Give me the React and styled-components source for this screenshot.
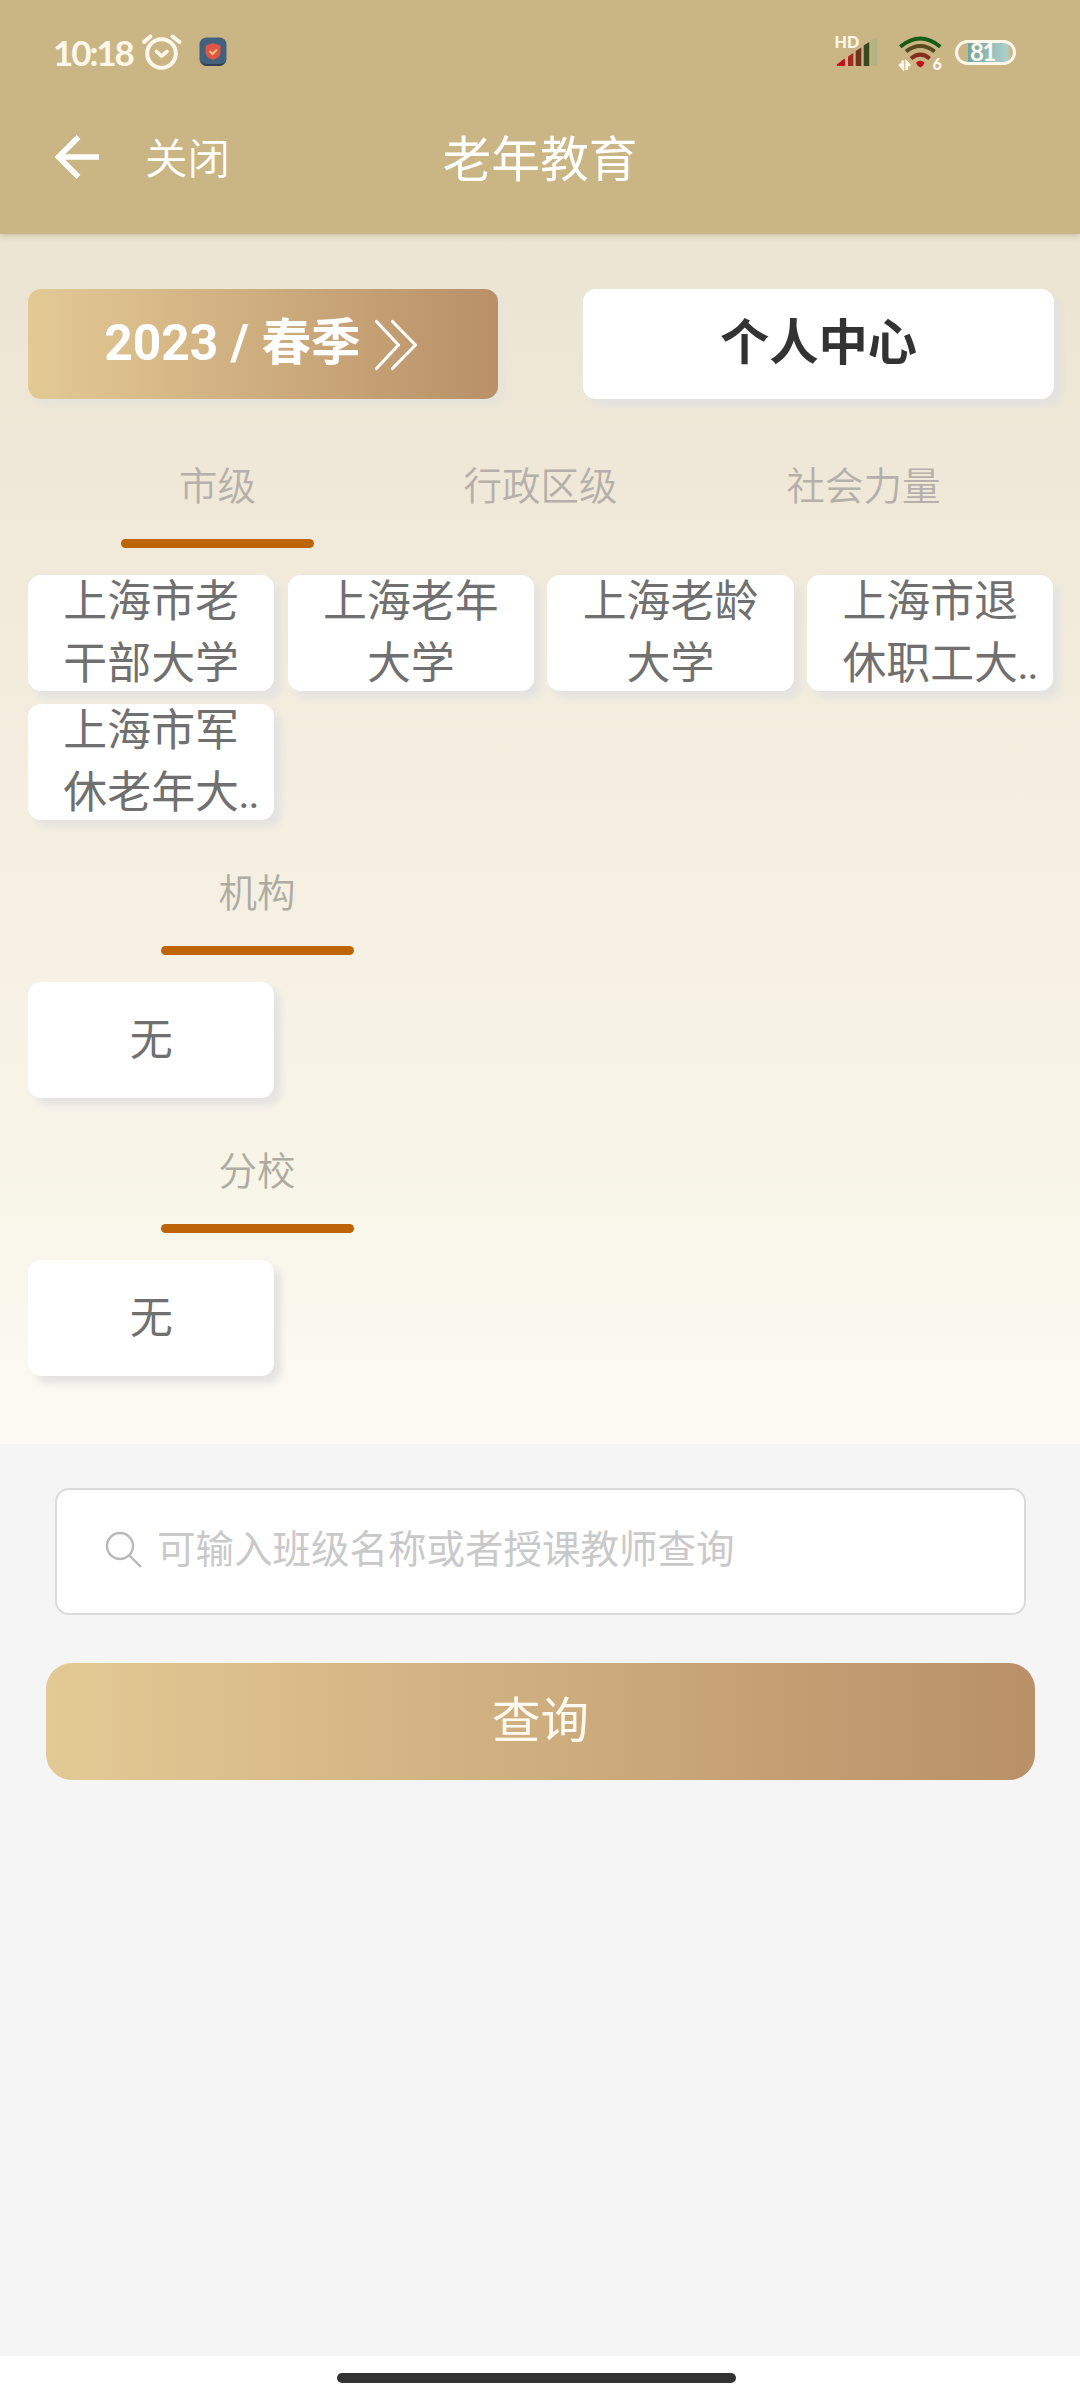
import React, { useState } from "react";
import styled, { createGlobalStyle } from "styled-components";

const GlobalStyle = createGlobalStyle`
  * {
    box-sizing: border-box;
  }

  body {
    margin: 0;
    background: #f5f5f5;
    font-family: Roboto, "Noto Sans CJK SC", sans-serif;
  }

  button {
    padding: 0;
    border: none;
    background: none;
    font-family: inherit;
  }
`;

const Page = styled.div`
  width: 1080px;
  height: 2400px;
  display: flex;
  flex-direction: column;
  background: #f5f5f5;
`;

const Header = styled.header`
  height: 234px;
  flex: none;
  background: #cab585;
  color: #fff;
  box-shadow: 0 1px 6px rgba(120, 100, 60, 0.35);
  z-index: 1;
`;

const StatusBar = styled.div`
  height: 104px;
  padding: 0 64px 0 53px;
  display: flex;
  align-items: center;
  color: #fff8ea;
`;

const Time = styled.span`
  width: 88px;
  font-family: Lato, sans-serif;
  font-size: 35px;
  font-weight: 700;
  letter-spacing: -2.1px;
  line-height: 50px;
`;

const StatusIcons = styled.div`
  margin-left: auto;
  display: flex;
  align-items: center;
`;

const Battery = styled.div`
  width: 61px;
  height: 25px;
  margin-left: 12px;
  padding-right: 6px;
  border: 3px solid #fff8ea;
  border-radius: 13px;
  background: linear-gradient(90deg, transparent 10px, #70a5a3 10px, #add0cc 49px, transparent 53px);
  font-family: Lato, sans-serif;
  font-size: 24px;
  font-weight: 700;
  line-height: 18px;
  letter-spacing: -1.5px;
  text-align: center;
`;

const NavBar = styled.div`
  height: 106px;
  display: grid;
  grid-template-columns: 1fr auto 1fr;
  align-items: center;
`;

const NavLeft = styled.div`
  display: flex;
  align-items: center;
  gap: 45px;
  padding-left: 54px;
`;

const CloseText = styled.span`
  margin-top: -4px;
  font-size: 42.5px;
  font-weight: 350;
`;

const Title = styled.h1`
  margin: -3px 0 0;
  font-size: 48.8px;
  font-weight: 400;
`;

const Content = styled.main`
  height: 1210px;
  flex: none;
  padding: 55px 26px 0 28px;
  background: linear-gradient(180deg, #ece4d2 0%, #f4eee0 45%, #f8f5e9 80%, #fcfaf3 100%);
`;

const TopActions = styled.div`
  display: flex;
  justify-content: space-between;
`;

const TopButton = styled.button`
  width: ${(props) => (props.$primary ? "470px" : "471px")};
  height: 110px;
  display: flex;
  align-items: center;
  justify-content: center;
  gap: 13px;
  padding-bottom: 12px;
  padding-right: ${(props) => (props.$primary ? "4px" : "0")};
  border-radius: 13px;
  font-size: ${(props) => (props.$primary ? "49.7px" : "49.3px")};
  font-weight: 700;
  color: ${(props) => (props.$primary ? "#fff" : "#333")};
  background: ${(props) =>
    props.$primary ? "linear-gradient(90deg, #e3ca95, #b99068)" : "#fff"};
  box-shadow: 7px 7px 7px ${(props) => (props.$primary ? "#e7e4db" : "#e3e2e0")};
`;

const Tabs = styled.div`
  display: flex;
  margin: 55px 26px 27px 28px;
`;

const Tab = styled.button`
  width: ${(props) => (props.$single ? "404px" : "323px")};
  height: 94px;
  display: flex;
  flex-direction: column;
  align-items: center;
  justify-content: space-between;
  color: ${(props) => (props.$single ? "#aeaba2" : "#b6b0ab")};
  font-size: 38.5px;
  font-weight: 350;
  line-height: 66px;

  &::after {
    content: "";
    width: 193px;
    height: 9px;
    border-radius: 5px;
    background: ${(props) => (props.$active ? "#be6306" : "transparent")};
  }
`;

const SchoolGrid = styled.div`
  display: grid;
  grid-template-columns: repeat(4, 246.3px);
  column-gap: 13.4px;
  row-gap: 13px;
`;

const School = styled.button`
  height: 116px;
  display: flex;
  align-items: center;
  justify-content: center;
  border-radius: 13px;
  background: #fff;
  box-shadow: 7px 7px 7px #e4e3e1;
  color: #707070;
  font-size: ${(props) => (props.$empty ? "43px" : "43.9px")};
  line-height: 62px;
`;

const SchoolName = styled.span`
  position: relative;
  width: 176px;
  white-space: pre-line;
`;

const Dots = styled.span`
  position: absolute;
  left: 175px;
  bottom: 0;
  letter-spacing: -1.5px;
`;

const Section = styled.section`
  padding-top: 41px;
`;

const SectionTab = styled.div`
  display: flex;
  margin: 0 27px 27px;
`;

const SearchArea = styled.section`
  flex: 1;
  padding: 44px 45px 0 46px;
`;

const SearchBox = styled.div`
  height: 127px;
  margin: 0 9px;
  padding-left: 48px;
  padding-bottom: 4px;
  display: flex;
  align-items: center;
  gap: 14px;
  border: 2px solid #dbdbdb;
  border-radius: 14px;
  background: #fff;
`;

const SearchInput = styled.input`
  flex: 1;
  padding: 0;
  border: none;
  outline: none;
  background: none;
  font-family: inherit;
  font-size: 38.5px;
  height: 60px;

  &::placeholder {
    color: #c9c9c9;
    opacity: 1;
  }
`;

const SearchButton = styled.button`
  width: 100%;
  height: 117px;
  margin-top: 48px;
  padding-bottom: 10px;
  border-radius: 26px;
  background: linear-gradient(90deg, #e3ca95, #b99068);
  color: #fffaf0;
  font-size: 48.5px;
`;

const HomeArea = styled.footer`
  height: 44px;
  flex: none;
  display: flex;
  justify-content: center;
  padding-top: 17px;
  padding-right: 7px;
  background: #fff;
`;

const HomeBar = styled.div`
  width: 399px;
  height: 10px;
  border-radius: 5px;
  background: #333;
`;

const AlarmIcon = () => (
  <svg width="42" height="38" viewBox="0 0 42 38" fill="none" stroke="#fff8ea" strokeLinecap="round">
    <circle cx="20.5" cy="20.5" r="14.3" strokeWidth="4" />
    <path d="M15.5 18.5l5 4.5 5.5-4.5" strokeWidth="3.6" strokeLinejoin="round" />
    <path d="M3 9l6.5-5.5M38.5 9l-7-5.5" strokeWidth="4" />
  </svg>
);

const Shield = styled.svg`
  margin-left: 16px;
`;

const ShieldIcon = () => (
  <Shield width="28" height="30" viewBox="0 0 28 30">
    <rect x="0.5" y="0.5" width="27" height="28.5" rx="7" fill="#42617d" />
    <path d="M1.5 24q2 5 7 5h11q5 0 7-5q-2 3-7 3h-11q-5 0-7-3z" fill="#33404f" />
    <path d="M14 6l7.5 2.5v7q0 5-7.5 7.5q-7.5-2.5-7.5-7.5v-7z" fill="#dd5546" />
    <path d="M10.5 14l3 3 4.5-4.5" fill="none" stroke="#f8c477" strokeWidth="2" />
  </Shield>
);

const SignalIcon = () => (
  <svg width="46" height="42" viewBox="0 -4 46 42">
    <path d="M4.5 30.2l6.7-5.5v5.5z" fill="#c1131d" stroke="#c1131d" strokeWidth="1.6" strokeLinejoin="round" />
    <path d="M15 21.5l5.3-3.5v13h-5.3z" fill="#a32a20" />
    <path d="M22.7 16l5.6-3.5v18.5h-5.6z" fill="#6d3420" />
    <path d="M30.7 10.5l5.6-3.5v24h-5.6z" fill="#364a1d" />
    <path d="M38.5 5.500l5.6-3.500v29h-5.6z" fill="#b3b284" />
    <text x="1.5" y="13.3" fill="#fff8ea" fontFamily="Lato, sans-serif" fontSize="16" fontWeight="900">
      HD
    </text>
  </svg>
);

const Wifi = styled.svg`
  margin-left: 18px;
`;

const WifiIcon = () => (
  <Wifi width="46" height="48" viewBox="0 -6 46 48" fill="none" strokeWidth="4">
    <path d="M3.3 12.8q20-16.5 40 0" stroke="#175b16" />
    <path d="M9 17.5q14.3-11 28.6 0" stroke="#574b1d" />
    <path d="M14 24.5q9.3-7.8 18.6 0" stroke="#862d1c" />
    <path d="M19 28.5q4.3-3.6 8.6 0l-1.5 3-2.8 2-2.8-2z" fill="#c1131d" />
    <path d="M5.8 26.5v7.5l-3.5-4M9.700 36v-7.5l3.500 3.500" stroke="#fff8ea" strokeWidth="2.8" />
    <text x="35.5" y="36" fill="#fff8ea" fontFamily="Lato, sans-serif" fontSize="16" fontWeight="900">
      6
    </text>
  </Wifi>
);

const BackIcon = () => (
  <svg width="46" height="44" viewBox="0 0 46 44" fill="none" stroke="#fff" strokeWidth="5.5">
    <path d="M24.5 2L4.5 22l20 20M4.5 22H45" />
  </svg>
);

const Chevrons = styled.svg`
  margin-top: 13px;
`;

const DoubleArrow = () => (
  <Chevrons
    width="44"
    height="52"
    viewBox="0 0 44 52"
    fill="none"
    stroke="#fff"
    strokeWidth="3.2"
    strokeLinecap="round"
    strokeLinejoin="round"
  >
    <path d="M2.5 2.5l22 23.5-22 23.5M18.5 2.5l23 23.5-23 23.5" />
  </Chevrons>
);

const MagnifierIcon = () => (
  <svg width="38" height="38" viewBox="0 0 38 38" fill="none" stroke="#b9b9b9" strokeWidth="2.4">
    <circle cx="15" cy="15" r="13" />
    <path d="M24.5 24.5L36 36" />
  </svg>
);

const levels = ["市级", "行政区级", "社会力量"];

const schools = [
  { name: "上海市老\n干部大学" },
  { name: "上海老年\n大学" },
  { name: "上海老龄\n大学" },
  { name: "上海市退\n休职工大", cut: true },
  { name: "上海市军\n休老年大", cut: true },
];

const EmptySection = ({ title }) => (
  <Section>
    <SectionTab>
      <Tab $single $active>
        {title}
      </Tab>
    </SectionTab>
    <SchoolGrid>
      <School $empty>无</School>
    </SchoolGrid>
  </Section>
);

export default function App() {
  const [level, setLevel] = useState(0);
  const [keyword, setKeyword] = useState("");

  return (
    <>
      <GlobalStyle />
      <Page>
        <Header>
          <StatusBar>
            <Time>10:18</Time>
            <AlarmIcon />
            <ShieldIcon />
            <StatusIcons>
              <SignalIcon />
              <WifiIcon />
              <Battery>81</Battery>
            </StatusIcons>
          </StatusBar>
          <NavBar>
            <NavLeft>
              <BackIcon />
              <CloseText>关闭</CloseText>
            </NavLeft>
            <Title>老年教育</Title>
          </NavBar>
        </Header>
        <Content>
          <TopActions>
            <TopButton $primary>
              2023 / 春季
              <DoubleArrow />
            </TopButton>
            <TopButton>个人中心</TopButton>
          </TopActions>
          <Tabs>
            {levels.map((item, i) => (
              <Tab key={item} $active={level === i} onClick={() => setLevel(i)}>
                {item}
              </Tab>
            ))}
          </Tabs>
          <SchoolGrid>
            {schools.map((school) => (
              <School key={school.name}>
                <SchoolName>
                  {school.name}
                  {school.cut && <Dots>..</Dots>}
                </SchoolName>
              </School>
            ))}
          </SchoolGrid>
          <EmptySection title="机构" />
          <EmptySection title="分校" />
        </Content>
        <SearchArea>
          <SearchBox>
            <MagnifierIcon />
            <SearchInput
              placeholder="可输入班级名称或者授课教师查询"
              value={keyword}
              onChange={(e) => setKeyword(e.target.value)}
            />
          </SearchBox>
          <SearchButton>查询</SearchButton>
        </SearchArea>
        <HomeArea>
          <HomeBar />
        </HomeArea>
      </Page>
    </>
  );
}
